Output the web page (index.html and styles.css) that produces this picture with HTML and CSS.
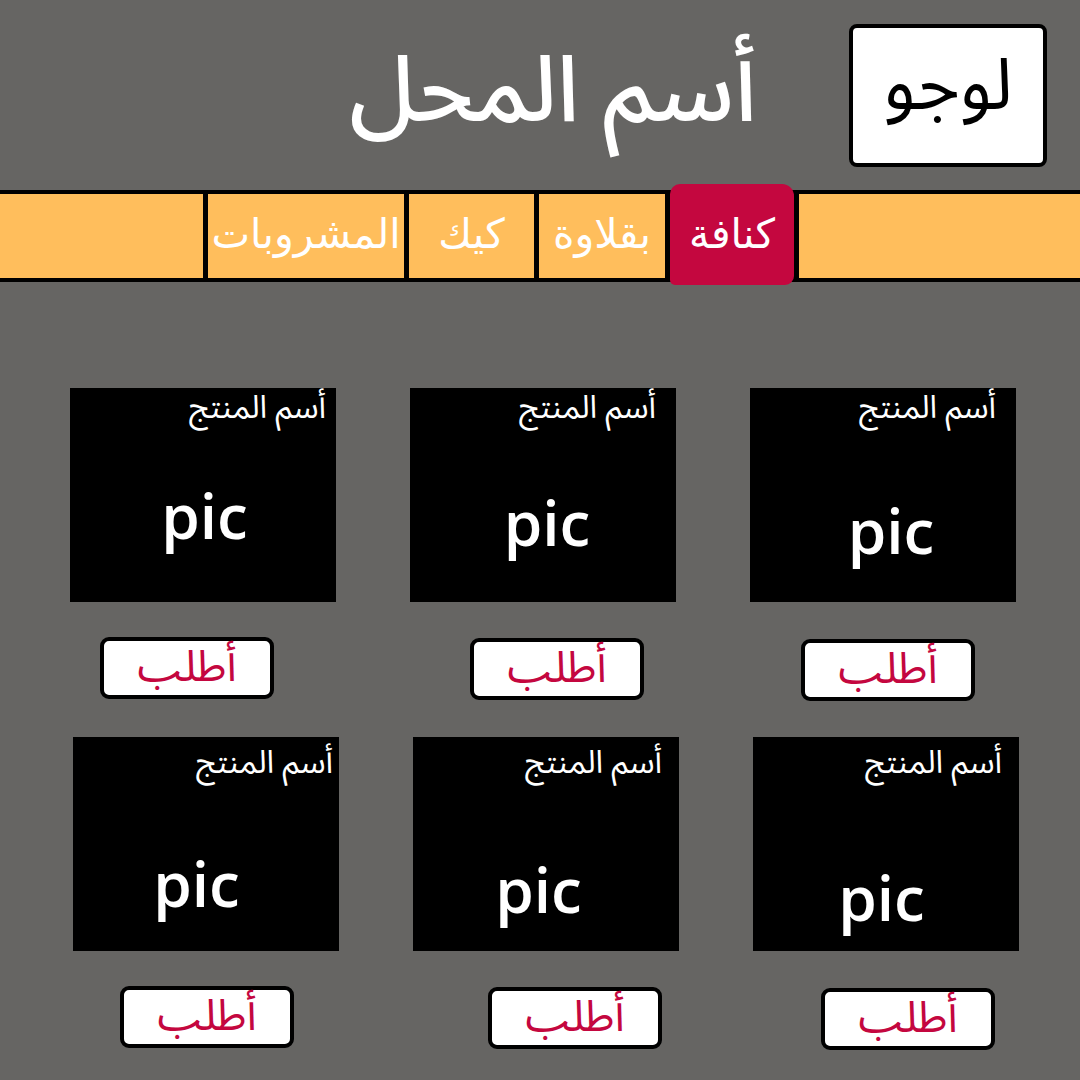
FILE: index.html
```html
<!DOCTYPE html>
<html lang="ar" dir="rtl">
<head>
<meta charset="utf-8">
<title>أسم المحل</title>
<link rel="stylesheet" href="styles.css">
</head>
<body>
<header class="top">
  <div class="logo">لوجو</div>
  <h1 class="shop">أسم المحل</h1>
</header>
<nav class="menu">
  <span class="cell cell-right"></span>
  <a class="cell item active">كنافة</a>
  <a class="cell item">بقلاوة</a>
  <a class="cell item">كيك</a>
  <a class="cell item">المشروبات</a>
  <span class="cell cell-left"></span>
</nav>
<main class="products">
  <div class="product">
    <div class="card"><div class="name">أسم المنتج</div><div class="pic">pic</div></div>
    <button class="order">أطلب</button>
  </div>
  <div class="product">
    <div class="card"><div class="name">أسم المنتج</div><div class="pic">pic</div></div>
    <button class="order">أطلب</button>
  </div>
  <div class="product">
    <div class="card"><div class="name">أسم المنتج</div><div class="pic">pic</div></div>
    <button class="order">أطلب</button>
  </div>
  <div class="product">
    <div class="card"><div class="name">أسم المنتج</div><div class="pic">pic</div></div>
    <button class="order">أطلب</button>
  </div>
  <div class="product">
    <div class="card"><div class="name">أسم المنتج</div><div class="pic">pic</div></div>
    <button class="order">أطلب</button>
  </div>
  <div class="product">
    <div class="card"><div class="name">أسم المنتج</div><div class="pic">pic</div></div>
    <button class="order">أطلب</button>
  </div>
</main>
</body>
</html>
```
FILE: styles.css
```css
html, body {
  margin: 0;
  padding: 0;
}
body {
  width: 1080px;
  height: 1080px;
  overflow: hidden;
  background: #666563;
  font-family: "Noto Sans Arabic", "Noto Sans", "DejaVu Sans", sans-serif;
}

/* header */
.top {
  display: flex;
  align-items: flex-start;
  gap: 68px;
  padding: 19px 33px 0 0;
}
.logo {
  margin-top: 5px;
  width: 198px;
  height: 143px;
  box-sizing: border-box;
  background: #fff;
  border: 4px solid #000;
  border-radius: 8px;
  display: flex;
  align-items: center;
  justify-content: center;
  color: #000;
  font-size: 72px;
  line-height: 1.3;
  padding-bottom: 18px;
}
.shop {
  flex: none;
  width: 470px;
  white-space: nowrap;
  margin: 0;
  padding: 0 24px 0 0;
  color: #fff;
  font-size: 92px;
  font-weight: 500;
  line-height: 1.6;
}

/* navigation */
.menu {
  display: flex;
  gap: 5px;
  margin-top: 23px;
  height: 92px;
  box-sizing: border-box;
  padding: 4px 0;
  background: #000;
}
.cell {
  background: #ffbe5c;
  display: flex;
  align-items: center;
  justify-content: center;
  color: #fff;
  font-family: "DejaVu Sans", sans-serif;
  font-size: 41px;
  text-decoration: none;
  padding-bottom: 4px;
  box-sizing: border-box;
}
.cell-right { width: 281px; }
.cell-left { width: 203px; }
.item:nth-child(2) { width: 124px; }
.item:nth-child(3) { width: 126px; }
.item:nth-child(4) { width: 125px; }
.item:nth-child(5) { width: 196px; }
.active {
  background: #c4073f;
  margin: -10px 0 -7px;
  border-radius: 10px 12px 9px 5px;
  padding-top: 3px;
}

/* products */
.products {
  display: grid;
  grid-template-columns: repeat(3, 266px);
  column-gap: 74px;
  padding: 106px 64px 0 0;
}
.product {
  display: flex;
  flex-direction: column;
  align-items: flex-start;
}
.product:nth-child(n+4) {
  margin-right: -3px;
  margin-left: 3px;
}
.card {
  width: 266px;
  height: 214px;
  background: #000;
  color: #fff;
  display: flex;
  flex-direction: column;
  box-sizing: border-box;
  padding: 0 20px 0 0;
}
.name {
  font-size: 32px;
  line-height: 1.3;
  padding-top: 0;
}
.pic {
  font-family: "Open Sans", sans-serif;
  font-weight: 600;
  font-size: 62px;
  line-height: 1;
  direction: ltr;
  text-align: center;
}
.order {
  margin-top: 35px;
  width: 174px;
  height: 62px;
  background: #fff;
  border: 4px solid #000;
  border-radius: 9px;
  color: #c4073f;
  font-family: "Noto Sans Arabic", "Noto Sans", "DejaVu Sans", sans-serif;
  font-size: 43px;
  line-height: 1;
  padding: 0 0 2px;
  display: flex;
  align-items: center;
  justify-content: center;
}

/* per-item placement of the hand-drawn mockup */
.product:nth-child(1) .pic { margin-top: 69px; padding-left: 16px; margin-right: -20px; }
.product:nth-child(2) .pic { margin-top: 61px; padding-left: 8px; margin-right: -20px; }
.product:nth-child(3) .pic { margin-top: 54px; padding-left: 3px; margin-right: -10px; }
.product:nth-child(4) .pic { margin-top: 81px; margin-right: -17px; padding-right: 9px; }
.product:nth-child(5) .pic { margin-top: 73px; margin-right: -17px; padding-right: 15px; }
.product:nth-child(6) .pic { margin-top: 67px; margin-right: -6px; padding-right: 19px; }

.product:nth-child(3) .card { padding-right: 10px; }
.product:nth-child(4) .card,
.product:nth-child(5) .card { padding-right: 17px; }
.product:nth-child(6) .card { padding-right: 6px; }
.product:nth-child(n+4) .name { padding-top: 6px; }

.product:nth-child(1) .order { margin-right: 41px; margin-top: 37px; }
.product:nth-child(2) .order { margin-right: 32px; margin-top: 36px; }
.product:nth-child(3) .order { margin-right: 62px; }
.product:nth-child(4) .order { margin-right: 24px; margin-top: 37px; }
.product:nth-child(5) .order { margin-right: 17px; margin-top: 36px; }
.product:nth-child(6) .order { margin-right: 45px; }
.product:nth-child(n+4) .card { margin-top: 36px; }
```
